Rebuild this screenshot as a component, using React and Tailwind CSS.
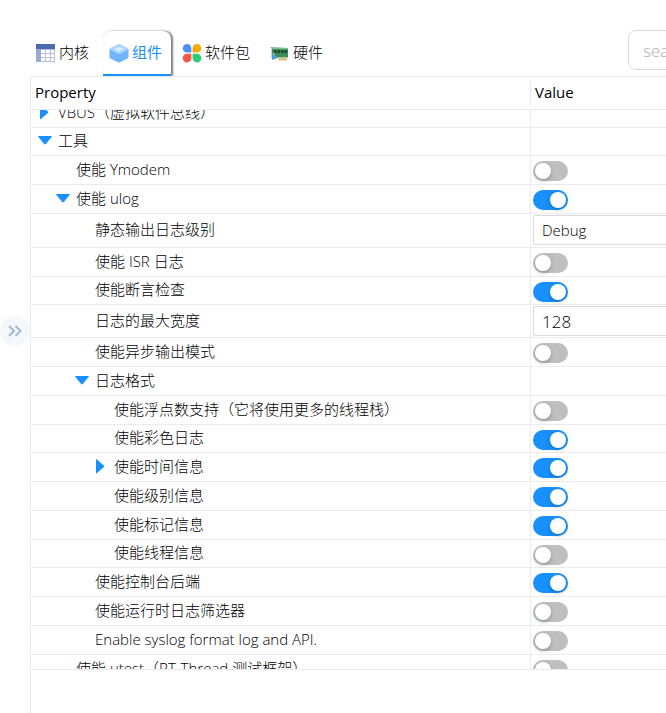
import React, { useState } from "react";

const ROWS = [
  { label: "VBUS（虚拟软件总线）", level: 0, height: "h-[29px]", arrow: "closed" },
  { label: "工具", level: 0, height: "h-[28px]", arrow: "open" },
  { label: "使能 Ymodem", level: 1, height: "h-[29px]", on: false },
  { label: "使能 ulog", level: 1, height: "h-[29px]", arrow: "open", on: true },
  { label: "静态输出日志级别", level: 2, height: "h-[34px]", options: ["Debug", "Info", "Warning", "Error"] },
  { label: "使能 ISR 日志", level: 2, height: "h-[29px]", on: false },
  { label: "使能断言检查", level: 2, height: "h-[28px]", on: true },
  { label: "日志的最大宽度", level: 2, height: "h-[33px]", value: "128" },
  { label: "使能异步输出模式", level: 2, height: "h-[29px]", on: false },
  { label: "日志格式", level: 2, height: "h-[29px]", arrow: "open" },
  { label: "使能浮点数支持（它将使用更多的线程栈）", level: 3, height: "h-[29px]", on: false },
  { label: "使能彩色日志", level: 3, height: "h-[28px]", on: true },
  { label: "使能时间信息", level: 3, height: "h-[29px]", arrow: "closed", on: true },
  { label: "使能级别信息", level: 3, height: "h-[29px]", on: true },
  { label: "使能标记信息", level: 3, height: "h-[29px]", on: true },
  { label: "使能线程信息", level: 3, height: "h-[28px]", on: false },
  { label: "使能控制台后端", level: 2, height: "h-[29px]", on: true },
  { label: "使能运行时日志筛选器", level: 2, height: "h-[29px]", on: false },
  { label: "Enable syslog format log and API.", level: 2, height: "h-[29px]", on: false },
  { label: "使能 utest（RT-Thread 测试框架）", level: 1, height: "h-[29px]", on: false },
];

const INDENT = ["pl-[5px]", "pl-[23px]", "pl-[42px]", "pl-[61px]"];

function KernelIcon() {
  return (
    <svg width="20" height="20" viewBox="0 0 20 20" aria-hidden="true">
      <rect x="0" y="1" width="19" height="18" fill="#b4c0dc" />
      <rect x="0" y="6" width="5" height="13" fill="#9aaad2" />
      <rect x="0" y="1" width="19" height="5" fill="#4a69ae" />
      <g fill="#fff">
        <rect x="5" y="7" width="4" height="3" />
        <rect x="10" y="7" width="4" height="3" />
        <rect x="15" y="7" width="3" height="3" />
        <rect x="5" y="11" width="4" height="3" />
        <rect x="10" y="11" width="4" height="3" />
        <rect x="15" y="11" width="3" height="3" />
        <rect x="5" y="15" width="4" height="3" />
        <rect x="10" y="15" width="4" height="3" />
        <rect x="15" y="15" width="3" height="3" />
      </g>
    </svg>
  );
}

function ComponentIcon() {
  return (
    <svg width="20" height="20" viewBox="0 0 20 20" aria-hidden="true">
      <path d="M0.5 6 L10 10.5 L19.5 6 V14 Q19.5 15 18.6 15.5 L11 19.2 Q10 19.7 9 19.2 L1.4 15.5 Q0.5 15 0.5 14 Z" fill="#6fb4fd" />
      <path d="M9 1.2 Q10 0.8 11 1.2 L19 5.2 Q19.8 6 19 6.6 L11 10.7 Q10 11.2 9 10.7 L1 6.6 Q0.2 6 1 5.2 Z" fill="#a9d3ff" />
      <path d="M10 3.6 L15.2 6.1 L10 8.8 L4.8 6.1 Z" fill="#d9ecff" />
    </svg>
  );
}

function PackageIcon() {
  return (
    <svg width="20" height="20" viewBox="0 0 20 20" aria-hidden="true">
      <path d="M5 1 A4.4 4.4 0 0 1 9.4 5.4 V8.2 Q9.4 9.6 8 9.6 H5 A4.3 4.3 0 0 1 5 1 Z" fill="#4a90fa" />
      <path d="M15 1 A4.4 4.4 0 0 0 10.6 5.4 V8.2 Q10.6 9.6 12 9.6 H15 A4.3 4.3 0 0 0 15 1 Z" fill="#f7ab00" />
      <path d="M5 19.4 A4.4 4.4 0 0 0 9.4 15 V12.2 Q9.4 10.8 8 10.8 H5 A4.3 4.3 0 0 0 5 19.4 Z" fill="#f7574a" />
      <path d="M15 19.4 A4.4 4.4 0 0 1 10.6 15 V12.2 Q10.6 10.8 12 10.8 H15 A4.3 4.3 0 0 1 15 19.4 Z" fill="#27cf76" />
    </svg>
  );
}

function HardwareIcon() {
  return (
    <svg width="20" height="20" viewBox="0 0 20 20" aria-hidden="true">
      <path d="M0.5 4 H2.5 V16.5 L1.5 15 V5 H0.5 Z" fill="#9aa5ab" />
      <path d="M2 4.5 L18 5 V14.5 L2 14.5 Z" fill="#3f8a5a" />
      <path d="M2 4.5 L18 5 V6.5 L2 6 Z" fill="#7fc08a" />
      <g fill="#1b4a32">
        <rect x="4" y="7" width="2.5" height="3" />
        <rect x="7.5" y="7" width="2.5" height="3" />
        <rect x="11" y="7" width="2.5" height="3" />
        <rect x="14.5" y="7" width="2.5" height="3" />
      </g>
      <path d="M2 11 L5 12 L8 15 L2 17 Z" fill="#4fa3d4" />
      <rect x="8.5" y="14.5" width="8.5" height="3" fill="#d3c67c" />
      <rect x="3" y="10" width="1.5" height="1.5" fill="#c9e27a" />
    </svg>
  );
}

const TABS = [
  { label: "内核", Icon: KernelIcon },
  { label: "组件", Icon: ComponentIcon },
  { label: "软件包", Icon: PackageIcon },
  { label: "硬件", Icon: HardwareIcon },
];

function Arrow({ state }) {
  if (!state) return <span className="w-[18px] shrink-0" />;
  return (
    <button type="button" aria-label={state === "open" ? "Collapse" : "Expand"} className="flex w-[18px] shrink-0 items-center pl-0.5">
      {state === "open" ? (
        <svg width="16" height="16" viewBox="0 0 16 16">
          <path d="M0.8 4 H13.2 Q14.4 4 13.6 5 L7.8 12 Q7 12.9 6.2 12 L0.4 5 Q-0.4 4 0.8 4 Z" fill="#1890ff" />
        </svg>
      ) : (
        <svg width="16" height="16" viewBox="0 0 16 16">
          <path d="M2 2 Q2 0.6 3 1.4 L9.8 7.4 Q10.6 8.2 9.8 9 L3 15 Q2 15.8 2 14.4 Z" fill="#1890ff" />
        </svg>
      )}
    </button>
  );
}

function Switch({ id, on }) {
  return (
    <input
      id={id}
      type="checkbox"
      role="switch"
      defaultChecked={on}
      className="mt-[5px] block h-5 w-[35px] appearance-none rounded-full bg-[#bfbfbf] p-0.5 before:block before:size-4 before:rounded-full before:bg-white before:shadow-[0_2px_4px_rgba(0,35,11,0.25)] checked:bg-[#1890ff] checked:before:ml-[15px]"
    />
  );
}

function Field({ id, row }) {
  if (row.options) {
    return (
      <select id={id} className="mt-px block h-[30px] w-[200px] appearance-none rounded-[2px] border border-[#d9d9d9] bg-white px-2 text-[15px]">
        {row.options.map((o) => (
          <option key={o}>{o}</option>
        ))}
      </select>
    );
  }
  if (row.value) {
    return <input id={id} type="text" defaultValue={row.value} className="mt-px block h-[30px] w-[200px] rounded-[2px] border border-[#d9d9d9] bg-white px-2 text-[17px]" />;
  }
  if (row.on !== undefined) return <Switch id={id} on={row.on} />;
  return null;
}

export default function App() {
  const [active, setActive] = useState(1);
  return (
    <div className="flex h-screen overflow-hidden bg-white font-['Open_Sans','Noto_Sans_CJK_SC',sans-serif] text-[15px] font-light text-black">
      <aside className="w-[30px] shrink-0 pt-[316px]">
        <button type="button" aria-label="Expand sidebar" className="flex size-[30px] items-center justify-center rounded-full bg-[#f5f7fa]">
          <svg width="16" height="14" viewBox="0 0 16 14" fill="none" stroke="#9dbbd8" strokeWidth="2">
            <path d="M2 2 L7 7 L2 12 M8.5 2 L13.5 7 L8.5 12" />
          </svg>
        </button>
      </aside>
      <main className="flex min-w-0 flex-1 flex-col">
        <header className="flex h-[76px] shrink-0 items-end justify-between">
          <nav role="tablist" className="flex shrink-0 gap-[5px]">
            {TABS.map(({ label, Icon }, i) => (
              <button
                key={label}
                type="button"
                role="tab"
                aria-selected={active === i}
                onClick={() => setActive(i)}
                className={
                  "flex h-[45px] items-center gap-[3px] rounded-t-lg border-b-2 pl-1.5 pr-[9px] " +
                  (active === i
                    ? "border-[#1890ff] font-normal text-[#1890ff] shadow-[2px_0px_2px_rgba(0,0,0,0.5),0_0_1px_rgba(0,0,0,0.2)]"
                    : "border-transparent")
                }
              >
                <Icon />
                {label}
              </button>
            ))}
          </nav>
          <input
            type="search"
            aria-label="Search"
            placeholder="search"
            className="-mr-[162px] mb-1.5 h-10 w-[200px] shrink-0 rounded-lg border border-[#d9d9d9] px-3.5 text-[17px] placeholder:text-[#b0b0b0]"
          />
        </header>
        <section className="flex min-h-0 flex-1 flex-col border-l border-t border-[#ebebeb]">
          <table className="w-full table-fixed border-separate border-spacing-0">
            <thead>
              <tr className="h-[33px] text-left">
                <th scope="col" className="w-[500px] border-b border-[#ebebeb] p-0 font-normal">
                  <div className="h-6 border-r border-[#ebebeb] pl-1 leading-[22px]">Property</div>
                </th>
                <th scope="col" className="border-b border-[#ebebeb] p-0 pl-1 font-normal">
                  <div className="h-6 leading-[22px]">Value</div>
                </th>
              </tr>
            </thead>
          </table>
          <div className="h-[560px] overflow-hidden border-b border-[#ebebeb]">
            <table className="-mt-[11px] w-full table-fixed border-separate border-spacing-0">
              <tbody>
                {ROWS.map((row, i) => (
                  <tr key={row.label} className={row.height}>
                    <td className="w-[500px] border-b border-r border-[#ebebeb] p-0 pb-[3px]">
                      <div className={"flex items-center gap-1 leading-6 " + INDENT[row.level]}>
                        <Arrow state={row.arrow} />
                        <label htmlFor={"field-" + i}>{row.label}</label>
                      </div>
                    </td>
                    <td className="border-b border-[#ebebeb] p-0 pl-0.5 align-top">
                      <Field id={"field-" + i} row={row} />
                    </td>
                  </tr>
                ))}
              </tbody>
            </table>
          </div>
        </section>
      </main>
    </div>
  );
}
